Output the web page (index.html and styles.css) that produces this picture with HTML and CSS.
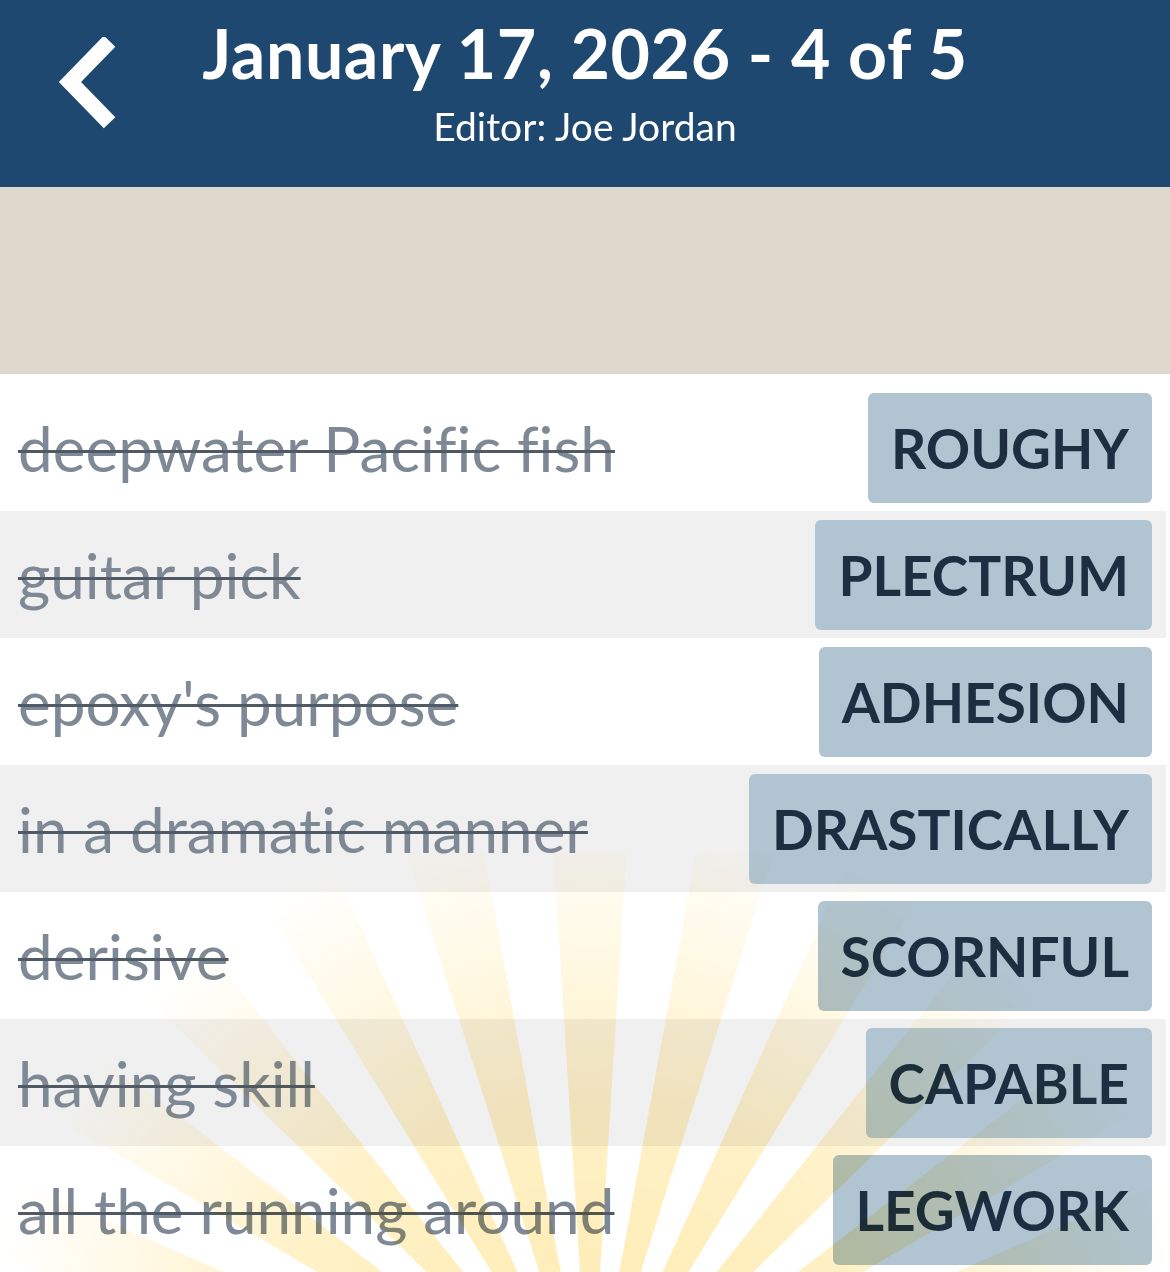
FILE: index.html
```html
<!DOCTYPE html>
<html lang="en">
<head>
    <meta charset="UTF-8">
    <title>January 17, 2026 - 4 of 5</title>
    <meta name="viewport" content="width=device-width, initial-scale=1">
    <link rel="stylesheet" href="styles.css">
</head>
<body>
<header class="topbar">
    <a class="back" href="#" aria-label="Back">
        <svg width="70" height="100" viewBox="0 0 70 100">
            <polyline points="52,10 18,45 52,80" fill="none" stroke="#fff" stroke-width="16" stroke-linejoin="miter" stroke-linecap="square"/>
        </svg>
    </a>
    <div class="titles">
        <h1>January 17, 2026 - 4 of 5</h1>
        <p>Editor: Joe Jordan</p>
    </div>
    <div></div>
</header>
<div class="banner"></div>
<ul class="clues">
    <li><span class="clue">deepwater Pacific fish</span><span class="answer">ROUGHY</span></li>
    <li><span class="clue">guitar pick</span><span class="answer">PLECTRUM</span></li>
    <li><span class="clue">epoxy's purpose</span><span class="answer">ADHESION</span></li>
    <li><span class="clue">in a dramatic manner</span><span class="answer">DRASTICALLY</span></li>
    <li><span class="clue">derisive</span><span class="answer">SCORNFUL</span></li>
    <li><span class="clue">having skill</span><span class="answer">CAPABLE</span></li>
    <li><span class="clue">all the running around</span><span class="answer">LEGWORK</span></li>
</ul>
<!-- sunburst over the bottom of the list -->
<svg class="rays" width="1170" height="420" viewBox="0 0 1170 420">
    <defs>
        <radialGradient id="glow" cx="590" cy="580" r="620" gradientUnits="userSpaceOnUse">
            <stop offset="0" stop-color="#ffd24a" stop-opacity="0.85"/>
            <stop offset="0.55" stop-color="#ffd24a" stop-opacity="0.55"/>
            <stop offset="1" stop-color="#ffd24a" stop-opacity="0"/>
        </radialGradient>
    </defs>
    <g id="burst" fill="url(#glow)"></g>
</svg>
<script>
// rays of the sunburst, centred below the page
var g = document.getElementById('burst');
var cx = 590, cy = 580, r = 720;
for (var a = -84; a <= 84; a += 14) {
    var w = 3.6;
    var a1 = (a - w - 90) * Math.PI / 180, a2 = (a + w - 90) * Math.PI / 180;
    var p = document.createElementNS('http://www.w3.org/2000/svg', 'polygon');
    p.setAttribute('points', cx + ',' + cy + ' ' +
        (cx + r * Math.cos(a1)) + ',' + (cy + r * Math.sin(a1)) + ' ' +
        (cx + r * Math.cos(a2)) + ',' + (cy + r * Math.sin(a2)));
    g.appendChild(p);
}
</script>
</body>
</html>
```

FILE: styles.css
```css
body { margin: 0; font-family: Lato, "Noto Sans", sans-serif; background: #fff; position: relative; width: 1170px; height: 1272px; overflow: hidden;}
.topbar { background: #1f4870; height: 187px; display: grid; grid-template-columns: 1fr auto 1fr; color: #fff;}
.back { display: flex; align-items: flex-start; padding: 37px 0 0 52px;}
.titles { text-align: center; padding-top: 12px;}
.titles h1 { margin: 0; font-size: 68px; font-weight: bold; line-height: 82px; letter-spacing: 0.6px;}
.titles p { margin: 9px 0 0 0; font-size: 39px; line-height: 46px;}
.banner { background: #dfd8cc; height: 187px;}
.clues { list-style: none; margin: 0; padding: 10px 4px 0 0;}
.clues li { height: 127px; box-sizing: border-box; display: flex; align-items: center; justify-content: space-between; padding: 0 14px 0 18px; background: #fff;}
.clues li:nth-child(even) { background: #f0f0f0;}
.clue { font-size: 62px; color: #7f8995; font-variant-ligatures: none; text-decoration: line-through; text-decoration-color: #4f5a66; text-decoration-thickness: 3px;}
.answer { height: 110px; display: flex; align-items: center; padding: 0 23px; background: #b0c4d1; border-radius: 6px; color: #1c2e40; font-size: 55px; font-weight: bold;}
.rays { position: absolute; left: 0; bottom: 0; pointer-events: none; mix-blend-mode: multiply; opacity: 0.55;}
```
